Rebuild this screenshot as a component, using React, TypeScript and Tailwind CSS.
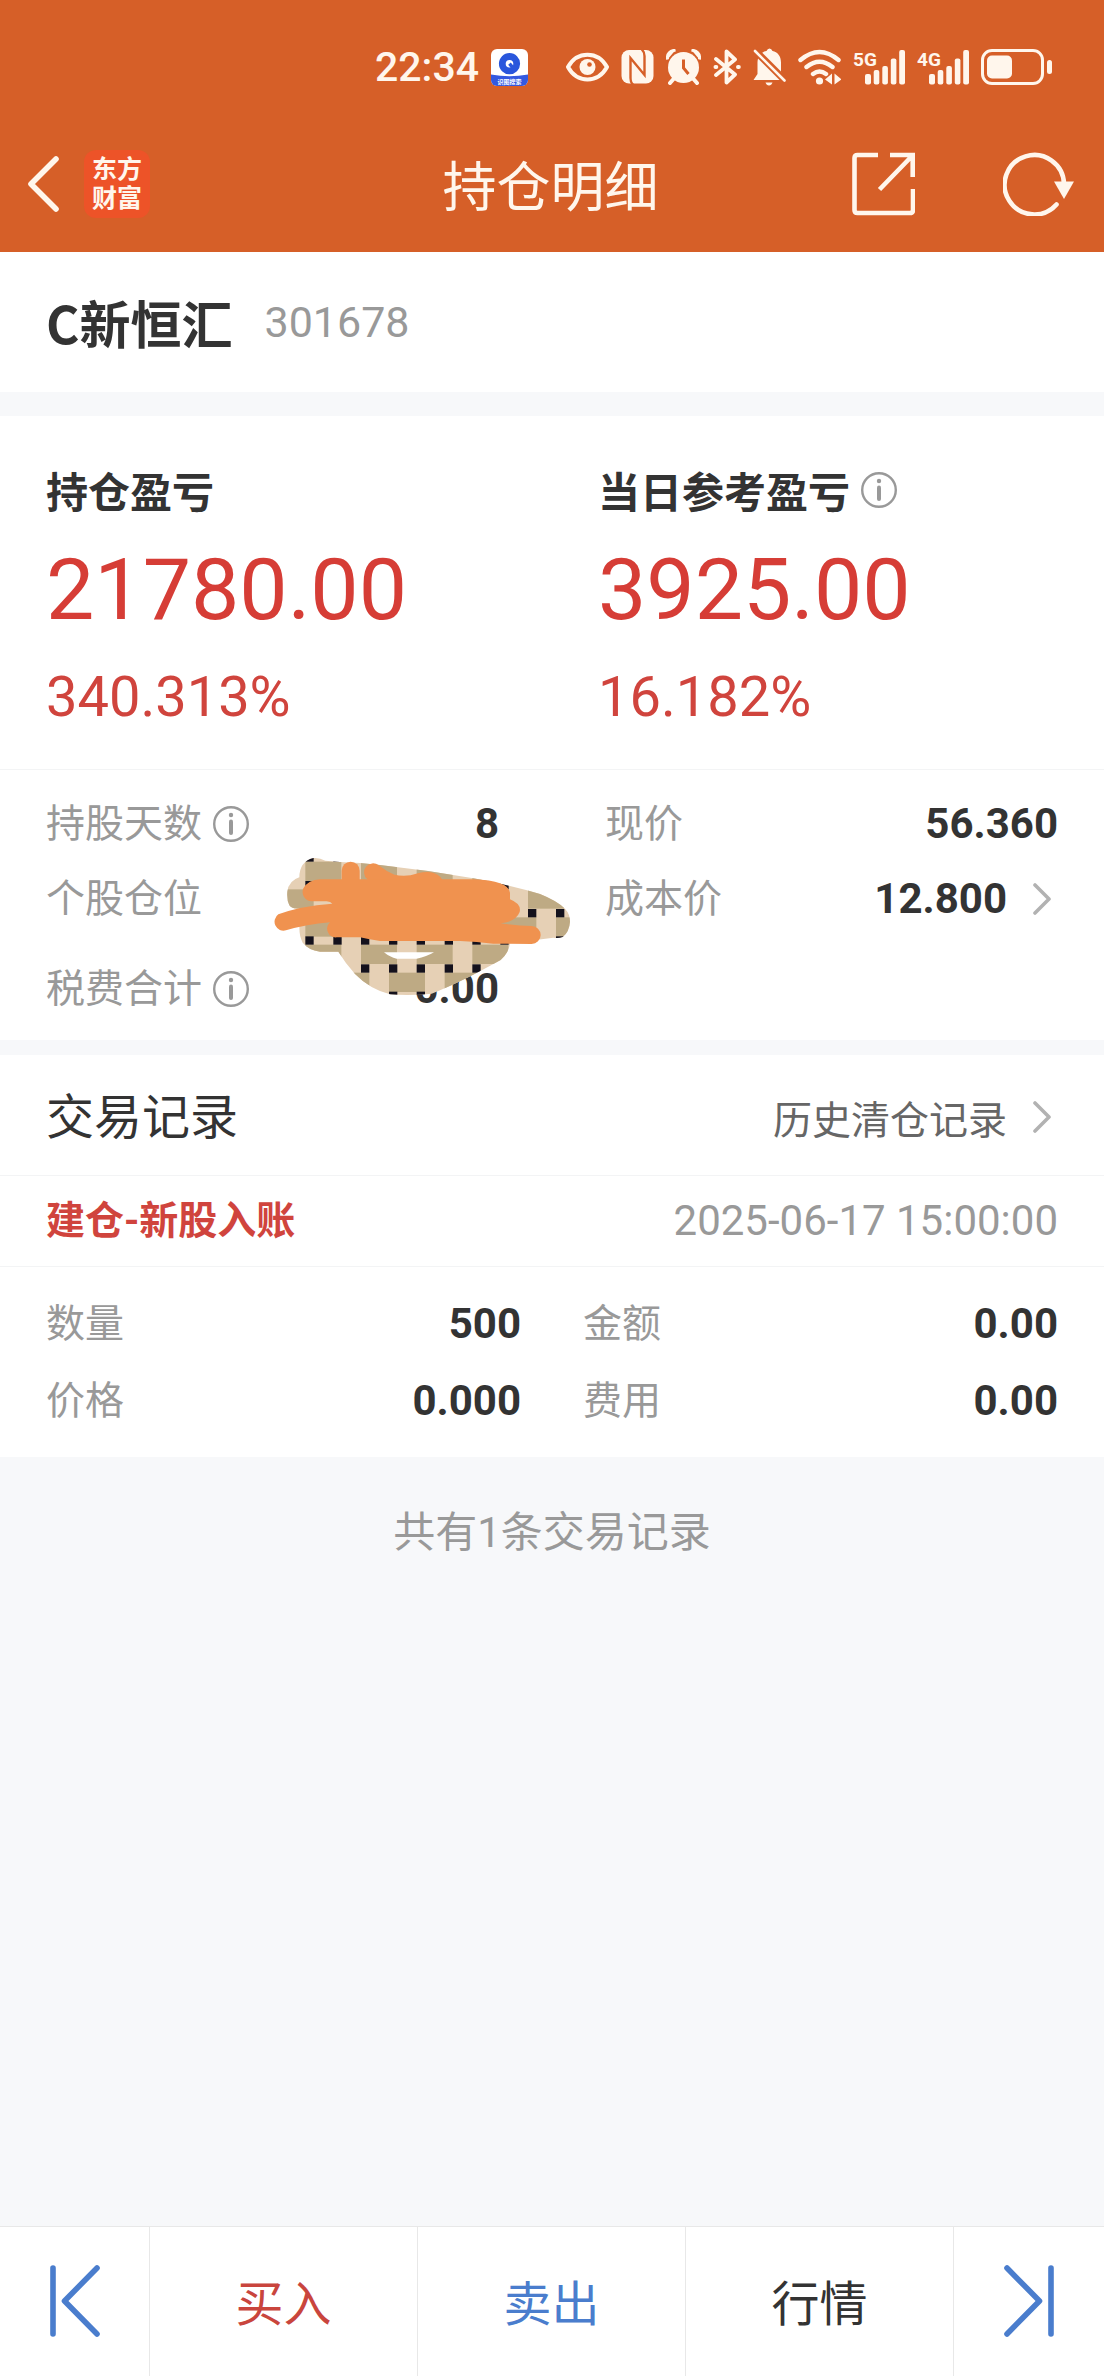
import type { ReactNode } from 'react';
import { clsx } from 'clsx';

interface Field {
  label: string;
  value: string;
  info?: boolean;
  link?: boolean;
  spaced?: boolean;
}

const positionLeft: Field[] = [
  { label: '持股天数', value: '8', info: true },
  { label: '个股仓位', value: '' },
  { label: '税费合计', value: '0.00', info: true, spaced: true },
];

const positionRight: Field[] = [
  { label: '现价', value: '56.360' },
  { label: '成本价', value: '12.800', link: true },
];

const tradeLeft: Field[] = [
  { label: '数量', value: '500' },
  { label: '价格', value: '0.000' },
];

const tradeRight: Field[] = [
  { label: '金额', value: '0.00' },
  { label: '费用', value: '0.00' },
];

function InfoIcon() {
  return (
    <svg className="h-9 w-9 shrink-0" viewBox="0 0 36 36" fill="none" aria-hidden="true">
      <circle cx="18" cy="18" r="16.8" stroke="#999" strokeWidth="2.4" />
      <circle cx="18" cy="9" r="2.2" fill="#999" />
      <path d="M18 15.500v11.500" stroke="#999" strokeWidth="4" strokeLinecap="round" />
    </svg>
  );
}

function Chevron() {
  return (
    <svg className="mr-[7px] ml-[26px] h-8 w-[18px] shrink-0" viewBox="0 0 18 32" fill="none" aria-hidden="true">
      <path d="M2 2l14 14L2 30" stroke="#b2b2b2" strokeWidth="3.6" strokeLinecap="round" strokeLinejoin="round" />
    </svg>
  );
}

function SignalIcon({ label }: { label: string }) {
  return (
    <svg className="h-9 w-[52px] overflow-visible" viewBox="0 0 52 36" fill="currentColor" aria-hidden="true">
      <text x="0" y="17" className="font-['Roboto'] text-[19px] font-bold">
        {label}
      </text>
      <rect x="12" y="25" width="6" height="10.5" rx="2" />
      <rect x="20.7" y="21" width="5.6" height="14.5" rx="2" />
      <rect x="29.3" y="17" width="5.6" height="18.5" rx="2" />
      <rect x="37.8" y="9.5" width="5.6" height="26" rx="2" />
      <rect x="46.2" y="1" width="5.8" height="34.5" rx="2" />
    </svg>
  );
}

function StatusBar() {
  return (
    <div className="flex items-center justify-end pt-[42px] pr-[52px] pb-6">
      <span className="text-[41px] leading-[50px] font-medium">22:34</span>
      <svg className="ml-3 h-[37px] w-[37px]" viewBox="0 0 37 37" aria-hidden="true">
        <defs>
          <clipPath id="appIcon">
            <rect width="37" height="37" rx="6" />
          </clipPath>
        </defs>
        <g clipPath="url(#appIcon)">
          <rect width="37" height="37" fill="#fff" />
          <circle cx="18.5" cy="14.7" r="7.2" fill="none" stroke="#2956dc" strokeWidth="6.8" />
          <path d="M18.5 14.7l3.8 4.6" stroke="#2956dc" strokeWidth="3.4" />
          <path d="M0 25.500q18.500 3.500 37 0V37H0z" fill="#3459e0" />
          <text x="18.500" y="35" textAnchor="middle" fill="#fff" className="font-['Noto_Sans_CJK_SC'] text-[6px] font-bold">
            识图搜索
          </text>
        </g>
      </svg>
      <div className="ml-[38px] flex items-center gap-3">
        {/* Eye comfort */}
        <svg className="h-9 w-[43px]" viewBox="0 0 43 36" fill="none" aria-hidden="true">
          <path d="M2 18C11 1.500 32 1.500 41 18 32 34.500 11 34.500 2 18z" stroke="currentColor" strokeWidth="4" strokeLinejoin="round" />
          <circle cx="21.500" cy="18" r="8" fill="currentColor" />
          <circle cx="23.500" cy="15.500" r="2.300" fill="#d65f28" />
        </svg>
        {/* NFC */}
        <svg className="h-9 w-[33px]" viewBox="0 0 33 36" aria-hidden="true">
          <rect x=".5" y="1" width="32" height="33.500" rx="7.500" fill="currentColor" />
          <path d="M12.500 36Q9.500 34 9.500 29V9l14 17V7q0-4-3-7" stroke="#d65f28" strokeWidth="2.400" fill="none" />
        </svg>
        {/* Alarm */}
        <svg className="h-9 w-[35px]" viewBox="0 0 35 36" aria-hidden="true">
          <path d="M1.500 10.500q-1-8 8-9.500M33.500 10.500q1-8-8-9.500" stroke="currentColor" strokeWidth="3" fill="currentColor" />
          <circle cx="17.500" cy="19" r="17" fill="#d65f28" />
          <path d="M7.500 30L4 34M27.500 30l3.500 4" stroke="currentColor" strokeWidth="4" strokeLinecap="round" />
          <circle cx="17.500" cy="18.500" r="15.500" fill="currentColor" />
          <path d="M17.500 10.500V19l5 6" stroke="#d65f28" strokeWidth="3" fill="none" />
        </svg>
        {/* Bluetooth */}
        <svg className="h-9 w-7" viewBox="0 0 28 36" fill="none" stroke="currentColor" strokeWidth="3.800" strokeLinejoin="round" strokeLinecap="round" aria-hidden="true">
          <path d="M3 10l19 15.500-8.500 8V2.500L22 10.500 3 26" />
          <path d="M2.500 18h.8M25 18h.8" strokeWidth="4" />
        </svg>
        {/* Muted bell */}
        <svg className="h-[38px] w-[33px]" viewBox="0 0 33 38" aria-hidden="true">
          <path d="M4.500 26V14.500C4.500 8 9 3.500 13.500 3q1-2.500 3-2.500t3 2.500C24.500 4 28 8 28 14.500V24l4.500 8H.5z" fill="currentColor" />
          <path d="M12.500 34.500h7q-1 3-3.500 3t-3.500-3z" fill="currentColor" />
          <path d="M0 .5l33 33" stroke="#d65f28" strokeWidth="7" />
          <path d="M2 3l29.500 29.500" stroke="currentColor" strokeWidth="2.600" strokeLinecap="round" />
        </svg>
        {/* Wi-Fi */}
        <svg className="h-9 w-[43px]" viewBox="0 0 43 36" fill="none" stroke="currentColor" strokeWidth="4.400" strokeLinecap="round" aria-hidden="true">
          <path d="M2.500 11q19-16 38 0M8.500 18q13-10.500 26 0M15 25q6.500-5 13 0" />
          <circle cx="21.500" cy="32" r="3.600" fill="currentColor" stroke="none" />
          <path d="M34 24.500v11l-7-5zM36.500 24.500v11l7-5z" fill="currentColor" stroke="none" />
        </svg>
        <SignalIcon label="5G" />
        <SignalIcon label="4G" />
        {/* Battery */}
        <svg className="h-9 w-[71px]" viewBox="0 0 71 36" fill="none" aria-hidden="true">
          <rect x="1.500" y="1.500" width="60" height="33" rx="9.500" stroke="currentColor" strokeWidth="3" />
          <rect x="6" y="6.500" width="25" height="23" rx="5" fill="currentColor" />
          <rect x="66" y="11" width="5" height="14" rx="2.500" fill="currentColor" />
        </svg>
      </div>
    </div>
  );
}

function NavBar() {
  return (
    <div className="grid grid-cols-[1fr_auto_1fr] items-center pt-[34px] pr-[30px] pb-[34px] pl-[27px]">
      <div className="flex items-center gap-[25px]">
        <button type="button" aria-label="返回">
          <svg className="h-14 w-8" viewBox="0 0 32 56" fill="none" aria-hidden="true">
            <path d="M29 3L4 28l25 25" stroke="currentColor" strokeWidth="5.600" strokeLinecap="round" strokeLinejoin="round" />
          </svg>
        </button>
        <span className="flex h-[68px] w-[66px] items-center justify-center rounded-xl bg-[#ed5328] text-center text-[25px] leading-[29px] font-bold">
          东方
          <br />
          财富
        </span>
      </div>
      <h1 className="font-['Noto_Sans_CJK_SC',sans-serif] text-[54px] leading-[68px]">持仓明细</h1>
      <div className="flex items-center justify-end gap-[88px]">
        <button type="button" aria-label="分享">
          <svg className="h-16 w-[63px]" viewBox="0 0 63 64" fill="none" stroke="currentColor" strokeWidth="4.600" aria-hidden="true">
            <path d="M26 3H5.500Q2.500 3 2.500 6v52q0 3 3 3H58q3 0 3-3V37M38 3h22.700v22M60 4L27.500 37.500" />
          </svg>
        </button>
        <button type="button" aria-label="刷新">
          <svg className="h-16 w-[71px]" viewBox="0 0 71 64" fill="none" aria-hidden="true">
            <path d="M53.500 52.500A29.700 29.700 0 1 1 61 32" stroke="currentColor" strokeWidth="4.600" strokeLinecap="round" />
            <path d="M51 29.500h20L61 47z" fill="currentColor" />
          </svg>
        </button>
      </div>
    </div>
  );
}

function Profit({ title, amount, percent, info }: { title: string; amount: string; percent: string; info?: boolean }) {
  return (
    <div>
      <h2 className="flex items-center gap-[11px] font-['Noto_Sans_CJK_SC',sans-serif] text-[42px] leading-[60px] font-bold">
        {title}
        {info && <InfoIcon />}
      </h2>
      <p className="mt-5 text-[86px] leading-[100px] text-[#d63d36]">{amount}</p>
      <p className="mt-[27px] text-[56px] leading-[60px] text-[#d0443d]">{percent}</p>
    </div>
  );
}

function FieldList({ fields, className }: { fields: Field[]; className: string }) {
  return (
    <dl className={clsx('flex flex-col', className)}>
      {fields.map((field) => (
        <div key={field.label} className={clsx('flex items-center justify-between leading-[60px]', field.spaced && 'mt-[15px]')}>
          <dt className="flex items-center gap-[11px] text-[39px] text-[#999]">
            {field.label}
            {field.info && <InfoIcon />}
          </dt>
          <dd className="flex items-center text-[42px] font-bold">
            {field.value}
            {field.link && <Chevron />}
          </dd>
        </div>
      ))}
    </dl>
  );
}

const weaveRows = [-19, 65, 148, 232, 314, 398, 480];
const weaveCols = [-31, 53, 136, 220, 303, 387, 470, 554, 637, 721, 804, 888];

// The weave flips phase in the lower rows, and past x = 700 in the middle ones
function isTan(row: number, col: number) {
  const flipped = row >= 4 || (row >= 2 && weaveCols[col] >= 700);
  return (row + col + (flipped ? 1 : 0)) % 2 === 1;
}

// Woven sticker with marker strokes that hides the position ratio
function Scribble() {
  return (
    <svg className="absolute top-[70px] left-[260px] h-[170px] w-[330px]" viewBox="0 0 990 510" aria-hidden="true">
      <defs>
        <clipPath id="sticker">
          <path d="M160 54Q178 52 196 62L240 66Q300 68 360 75Q500 90 640 115Q740 133 840 162Q890 182 915 206Q930 222 930 245Q928 275 908 291Q895 296 880 293L750 310Q746 340 722 360Q650 400 600 424Q550 448 515 461Q450 468 390 463Q330 448 285 402Q255 368 235 335L180 335Q145 330 128 308Q118 290 118 262V206Q96 208 88 196Q80 180 82 155Q86 122 118 112Q118 65 160 54z" />
        </clipPath>
      </defs>
      <g clipPath="url(#sticker)">
        <rect width="990" height="510" fill="#e6d0b5" />
        {weaveRows.map((y, row) =>
          weaveCols.map((x, col) => isTan(row, col) && <rect key={`${y}:${x}`} x={x} y={y} width="108" height="58" fill="#beaa84" />)
        )}
        {weaveRows.map((y) => weaveCols.map((x) => <rect key={`${y}:${x}`} x={x} y={y - 25} width="25" height="25" fill="#14111c" />))}
      </g>
      <path d="M372 337Q390 352 410 356H470Q500 350 522 337z" fill="#fff" />
      <g fill="none" stroke="#f0924f" strokeWidth="54" strokeLinecap="round" strokeLinejoin="round">
        <path d="M272 92v60" />
        <path d="M339 97Q365 118 395 130Q440 140 480 126Q510 118 522 130" />
      </g>
      <path
        fill="#f0924f"
        d="M180 118L640 118Q745 122 750 158V178Q785 192 779 216Q768 245 722 250Q770 257 815 258A27 27 0 0 1 815 312L700 311Q650 305 600 303H360Q330 299 300 292H230A26 26 0 0 1 210 247Q140 253 78 271A27 27 0 0 1 55 223Q120 198 217 191Q212 185 200 184H155A28 28 0 0 1 130 145Q145 120 180 118z"
      />
    </svg>
  );
}

function FooterButton({ label, className, children }: { label?: string; className?: string; children: ReactNode }) {
  return (
    <button
      type="button"
      aria-label={label}
      className={clsx("flex items-center justify-center pt-[37px] pb-[39px] font-['Noto_Sans_CJK_SC',sans-serif] text-[48px] leading-[73px]", className)}
    >
      {children}
    </button>
  );
}

export default function App() {
  return (
    <div className="flex min-h-screen flex-col bg-[#f7f8fa] font-['Roboto','Noto_Sans_CJK_SC',sans-serif] text-[#333]">
      <header className="bg-[#d65f28] text-[#fff6ec]">
        <StatusBar />
        <NavBar />
      </header>

      <main>
        <section className="flex items-center gap-8 bg-white px-[46px] py-[34px] leading-[72px]">
          <h2 className="font-['Noto_Sans_CJK_SC',sans-serif] text-[51px] font-bold">C新恒汇</h2>
          <span className="text-[43px] text-[#999]">301678</span>
        </section>

        <section className="mt-6 bg-white">
          <div className="grid grid-cols-2 border-b border-[#f3f4f5] px-[46px] pt-11 pb-[42px]">
            <Profit title="持仓盈亏" amount="21780.00" percent="340.313%" />
            <div className="pl-[46px]">
              <Profit title="当日参考盈亏" amount="3925.00" percent="16.182%" info />
            </div>
          </div>
          <div className="relative grid grid-cols-2 gap-[106px] px-[46px] pt-6 pb-[21px]">
            <FieldList fields={positionLeft} className="gap-[15px]" />
            <FieldList fields={positionRight} className="gap-[15px]" />
            <Scribble />
          </div>
        </section>

        <section className="mt-[15px] bg-white">
          <div className="flex items-baseline justify-between border-b border-[#f3f4f5] px-[46px] py-7 font-['Noto_Sans_CJK_SC',sans-serif] leading-[60px]">
            <h2 className="text-[48px]">交易记录</h2>
            <a href="#history" className="flex items-center text-[39px] text-[#666]">
              历史清仓记录
              <Chevron />
            </a>
          </div>
          <div className="flex items-center justify-between border-b border-[#f3f4f5] px-[46px] py-[15px] leading-[60px]">
            <h3 className="text-[39px] font-bold text-[#d0443d]">建仓-新股入账</h3>
            <time className="text-[42px] text-[#999]">2025-06-17 15:00:00</time>
          </div>
          <div className="grid grid-cols-2 gap-[62px] px-[46px] pt-[27px] pb-[26px]">
            <FieldList fields={tradeLeft} className="gap-[17px]" />
            <FieldList fields={tradeRight} className="gap-[17px]" />
          </div>
        </section>

        <p className="pt-[46px] pb-11 text-center text-[42px] leading-[60px] text-[#999]">共有1条交易记录</p>
      </main>

      <footer className="mt-auto grid grid-cols-[150px_1fr_1fr_1fr_150px] divide-x divide-[#e8e8e8] border-t border-[#e8e8e8] bg-white">
        <FooterButton label="上一个" className="text-[#4a7dcd]">
          <svg className="h-[72px] w-[50px]" viewBox="0 0 50 72" fill="none" stroke="currentColor" strokeWidth="5.600" strokeLinecap="round" strokeLinejoin="round" aria-hidden="true">
            <path d="M3 3v66M47 3L14.500 36 47 69" />
          </svg>
        </FooterButton>
        <FooterButton className="text-[#c9453d]">买入</FooterButton>
        <FooterButton className="text-[#4a7dcd]">卖出</FooterButton>
        <FooterButton>行情</FooterButton>
        <FooterButton label="下一个" className="text-[#4a7dcd]">
          <svg className="h-[72px] w-[50px]" viewBox="0 0 50 72" fill="none" stroke="currentColor" strokeWidth="5.600" strokeLinecap="round" strokeLinejoin="round" aria-hidden="true">
            <path d="M47 3v66M3 3l32.500 33L3 69" />
          </svg>
        </FooterButton>
      </footer>
    </div>
  );
}
